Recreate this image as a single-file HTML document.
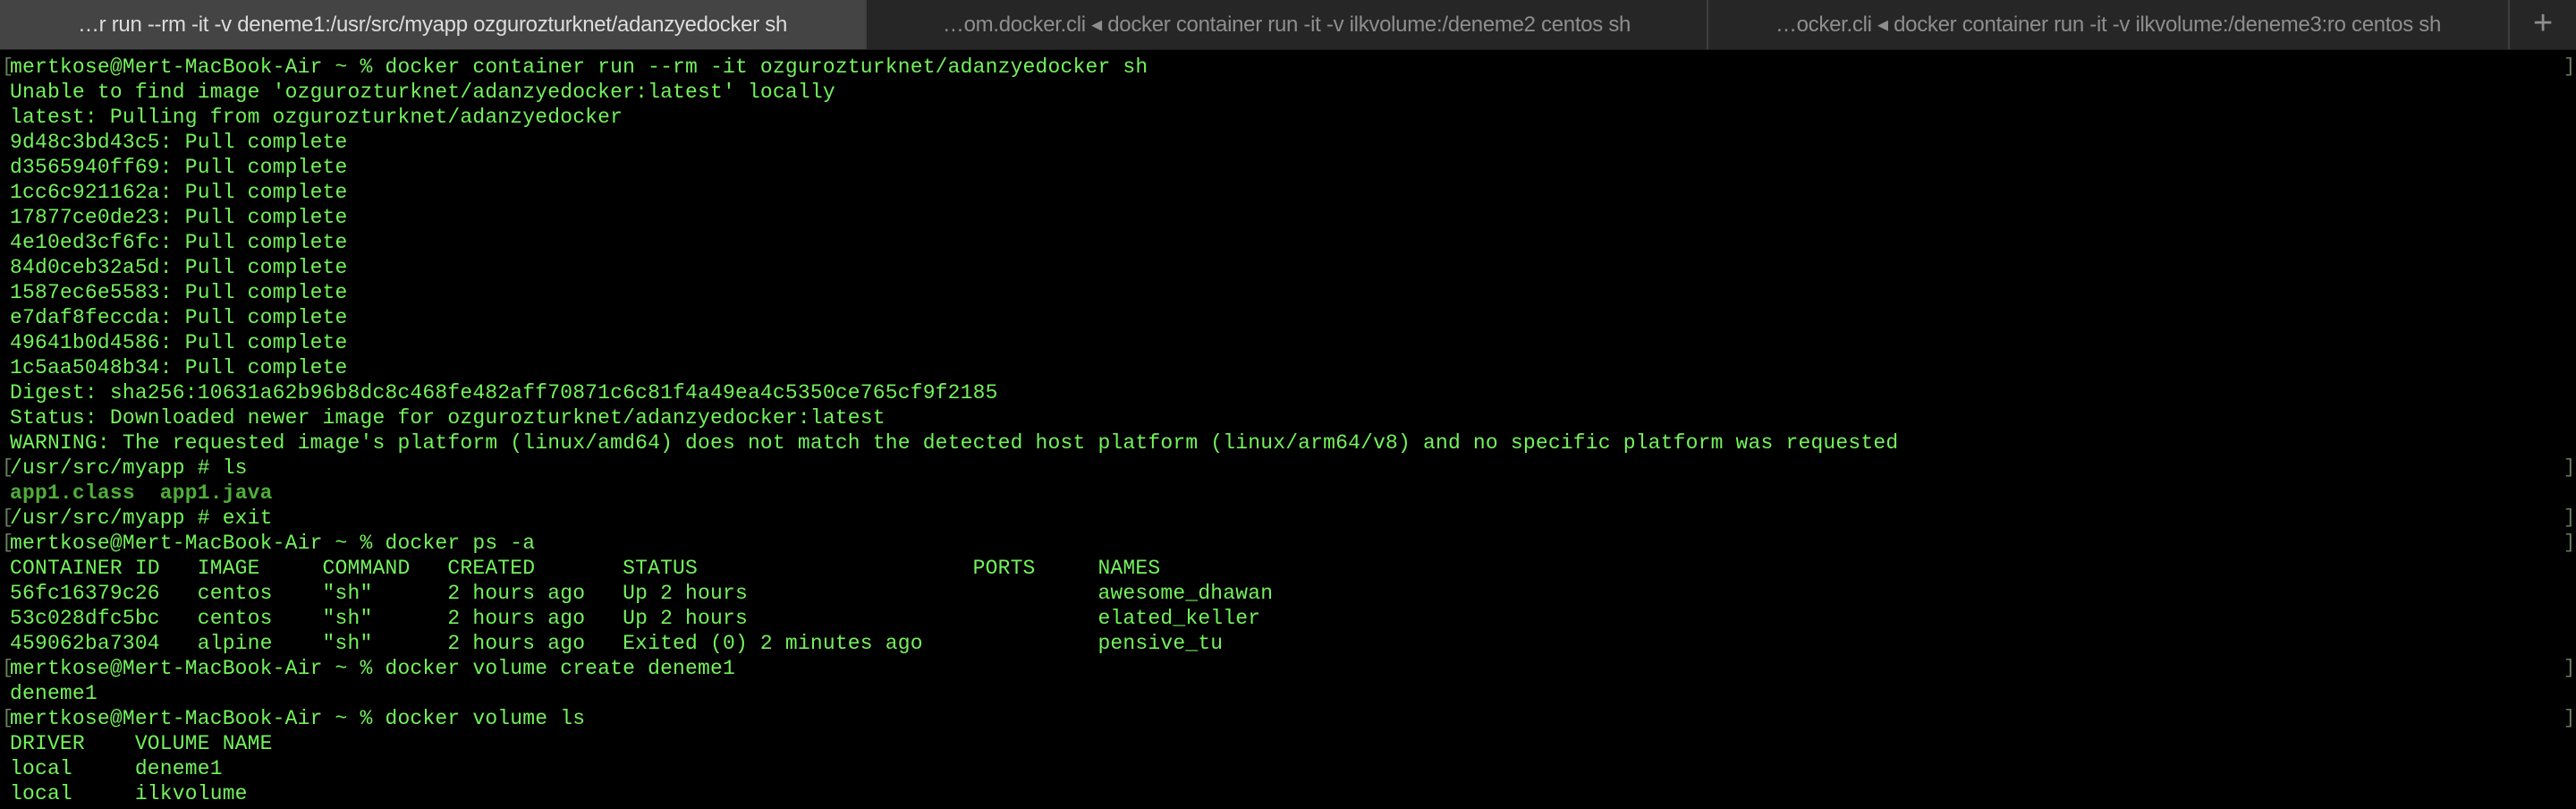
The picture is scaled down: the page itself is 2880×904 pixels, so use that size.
<!DOCTYPE html>
<html><head><meta charset="utf-8"><style>
html,body{margin:0;padding:0;background:#000;width:2880px;height:904px;overflow:hidden}
.tabs{position:absolute;left:0;top:0;width:2880px;height:55px;background:#262626;border-bottom:1px solid #1a1a1a}
.tab{position:absolute;top:0;height:55px;line-height:55px;text-align:center;font-family:"Liberation Sans",sans-serif;font-size:24px;color:#8e8e8e;letter-spacing:-0.3px;white-space:nowrap;overflow:hidden;border-right:2px solid #3e3e3e;box-sizing:border-box}
.t1{left:0;width:969px;background:#444;color:#dcdcdc}
.t2{left:969px;width:941px}
.t3{left:1910px;width:896px}
.t4{left:2806px;width:74px;border:none;font-size:38px;color:#8e8e8e;line-height:52px}
pre{position:absolute;left:11px;top:61px;margin:0;font-family:"Liberation Mono",monospace;font-size:23px;letter-spacing:0.18px;line-height:28px;color:#74f25c}
.b{color:#4fae3a;font-weight:bold}
.brl,.brr{position:absolute;font-family:"Liberation Mono",monospace;font-size:22px;color:#6a7f60;line-height:28px}
.brl{left:2px}.brr{left:2866px}
</style></head><body>
<div class="tabs">
<div class="tab t1">…r run --rm -it -v deneme1:/usr/src/myapp ozgurozturknet/adanzyedocker sh</div>
<div class="tab t2">…om.docker.cli ◂ docker container run -it -v ilkvolume:/deneme2 centos sh</div>
<div class="tab t3">…ocker.cli ◂ docker container run -it -v ilkvolume:/deneme3:ro centos sh</div>
<div class="tab t4">+</div>
</div>
<div class="brl" style="top:61px">[</div><div class="brr" style="top:61px">]</div>
<div class="brl" style="top:509px">[</div><div class="brr" style="top:509px">]</div>
<div class="brl" style="top:565px">[</div><div class="brr" style="top:565px">]</div>
<div class="brl" style="top:593px">[</div><div class="brr" style="top:593px">]</div>
<div class="brl" style="top:733px">[</div><div class="brr" style="top:733px">]</div>
<div class="brl" style="top:789px">[</div><div class="brr" style="top:789px">]</div>
<pre>mertkose@Mert-MacBook-Air ~ % docker container run --rm -it ozgurozturknet/adanzyedocker sh
Unable to find image 'ozgurozturknet/adanzyedocker:latest' locally
latest: Pulling from ozgurozturknet/adanzyedocker
9d48c3bd43c5: Pull complete
d3565940ff69: Pull complete
1cc6c921162a: Pull complete
17877ce0de23: Pull complete
4e10ed3cf6fc: Pull complete
84d0ceb32a5d: Pull complete
1587ec6e5583: Pull complete
e7daf8feccda: Pull complete
49641b0d4586: Pull complete
1c5aa5048b34: Pull complete
Digest: sha256:10631a62b96b8dc8c468fe482aff70871c6c81f4a49ea4c5350ce765cf9f2185
Status: Downloaded newer image for ozgurozturknet/adanzyedocker:latest
WARNING: The requested image's platform (linux/amd64) does not match the detected host platform (linux/arm64/v8) and no specific platform was requested
/usr/src/myapp # ls
<span class="b">app1.class</span>  <span class="b">app1.java</span>
/usr/src/myapp # exit
mertkose@Mert-MacBook-Air ~ % docker ps -a
CONTAINER ID   IMAGE     COMMAND   CREATED       STATUS                      PORTS     NAMES
56fc16379c26   centos    "sh"      2 hours ago   Up 2 hours                            awesome_dhawan
53c028dfc5bc   centos    "sh"      2 hours ago   Up 2 hours                            elated_keller
459062ba7304   alpine    "sh"      2 hours ago   Exited (0) 2 minutes ago              pensive_tu
mertkose@Mert-MacBook-Air ~ % docker volume create deneme1
deneme1
mertkose@Mert-MacBook-Air ~ % docker volume ls
DRIVER    VOLUME NAME
local     deneme1
local     ilkvolume</pre>
</body></html>
